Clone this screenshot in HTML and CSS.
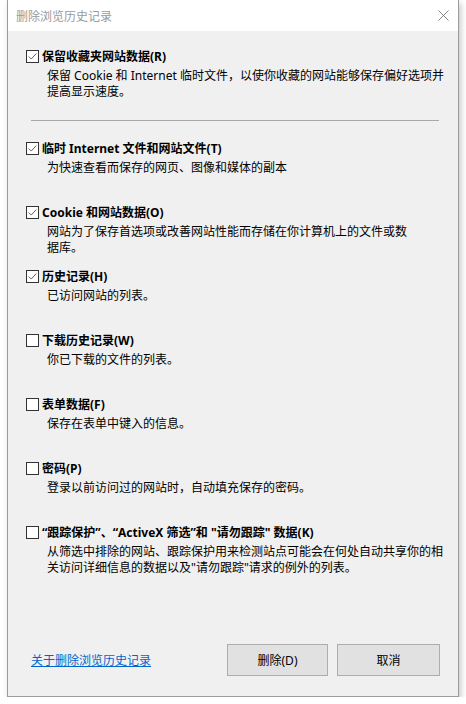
FILE: index.html
```html
<!DOCTYPE html>
<html lang="zh-CN">
<head>
    <meta charset="UTF-8">
    <title>删除浏览历史记录</title>
    <link rel="stylesheet" href="styles.css">
</head>
<body>
    <div class="dialog">
        <div class="titlebar">
            <span class="title">删除浏览历史记录</span>
            <svg class="close" width="12" height="12" viewBox="0 0 12 12">
                <path d="M0.5 0.5 L11.5 11.5 M11.5 0.5 L0.5 11.5" stroke="#7a7a7a" stroke-width="1" fill="none"/>
            </svg>
        </div>

        <div class="content">
            <div class="option first">
                <div class="label"><span class="box checked"><svg viewBox="0 0 13 13"><polyline points="2,6.5 5,9.5 11,3"/></svg></span>保留收藏夹网站数据(R)</div>
                <p class="desc">保留 Cookie 和 Internet 临时文件，以使你收藏的网站能够保存偏好选项并<br>提高显示速度。</p>
            </div>

            <hr class="sep">

            <div class="options">
                <div class="option">
                    <div class="label"><span class="box checked"><svg viewBox="0 0 13 13"><polyline points="2,6.5 5,9.5 11,3"/></svg></span>临时 Internet 文件和网站文件(T)</div>
                    <p class="desc">为快速查看而保存的网页、图像和媒体的副本</p>
                </div>
                <div class="option">
                    <div class="label"><span class="box checked"><svg viewBox="0 0 13 13"><polyline points="2,6.5 5,9.5 11,3"/></svg></span>Cookie 和网站数据(O)</div>
                    <p class="desc">网站为了保存首选项或改善网站性能而存储在你计算机上的文件或数<br>据库。</p>
                </div>
                <div class="option">
                    <div class="label"><span class="box checked"><svg viewBox="0 0 13 13"><polyline points="2,6.5 5,9.5 11,3"/></svg></span>历史记录(H)</div>
                    <p class="desc">已访问网站的列表。</p>
                </div>
                <div class="option">
                    <div class="label"><span class="box"></span>下载历史记录(W)</div>
                    <p class="desc">你已下载的文件的列表。</p>
                </div>
                <div class="option">
                    <div class="label"><span class="box"></span>表单数据(F)</div>
                    <p class="desc">保存在表单中键入的信息。</p>
                </div>
                <div class="option">
                    <div class="label"><span class="box"></span>密码(P)</div>
                    <p class="desc">登录以前访问过的网站时，自动填充保存的密码。</p>
                </div>
                <div class="option">
                    <div class="label"><span class="box"></span>“跟踪保护”、“ActiveX 筛选”和 "请勿跟踪" 数据(K)</div>
                    <p class="desc">从筛选中排除的网站、跟踪保护用来检测站点可能会在何处自动共享你的相<br>关访问详细信息的数据以及"请勿跟踪"请求的例外的列表。</p>
                </div>
            </div>

            <div class="footer">
                <a class="help" href="#">关于删除浏览历史记录</a>
                <button type="button" class="btn btn-delete">删除(D)</button>
                <button type="button" class="btn btn-cancel">取消</button>
            </div>
        </div>
    </div>
</body>
</html>
```

FILE: styles.css
```css
body {
    margin: 0;
    background-color: #ffffff;
    font-family: "Noto Sans", "Noto Sans CJK SC", sans-serif;
    font-size: 12px;
    color: #000;
}
.dialog {
    box-sizing: border-box;
    width: 452px;
    height: 697px;
    margin-left: 7px;
    border: 1px solid #9c9c9c;
    border-top: none;
    background: #f0f0f0;
    box-shadow: 2px 3px 6px rgba(0, 0, 0, 0.22);
    display: flex;
    flex-direction: column;
}
.titlebar {
    height: 31px;
    background: #ffffff;
    display: flex;
    align-items: center;
    justify-content: space-between;
    padding: 0 9px 0 8px;
    flex-shrink: 0;
}
.title {
    color: #9a9a9a;
    font-size: 12px;
}
.close {
    display: block;
    width: 11px;
    height: 11px;
    margin-bottom: 1px;
}
.content {
    flex: 1;
    display: flex;
    flex-direction: column;
    padding: 17px 18px 20px 18px;
}
.label {
    display: flex;
    align-items: center;
    height: 16px;
    font-weight: bold;
    white-space: nowrap;
}
.box {
    box-sizing: border-box;
    width: 13px;
    height: 13px;
    border: 1px solid #333;
    background: #fff;
    margin-right: 3px;
    flex-shrink: 0;
}
.box svg {
    display: block;
    width: 11px;
    height: 11px;
    fill: none;
    stroke: #444;
    stroke-width: 1;
}
.desc {
    margin: 4px 0 0 21px;
    line-height: 16px;
    white-space: nowrap;
}
.sep {
    margin: 20px 1px 19px 5px;
    border: none;
    border-top: 1px solid #a8a8a8;
    height: 0;
}
.options .option {
    height: 64px;
}
.footer {
    margin-top: auto;
    display: flex;
    align-items: center;
    padding-left: 5px;
}
.help {
    flex: 1;
    color: #0066cc;
    text-decoration: underline;
}
.btn {
    box-sizing: border-box;
    height: 32px;
    background: #e1e1e1;
    border: 1px solid #adadad;
    font-family: inherit;
    font-size: 12px;
    color: #000;
    padding: 0;
}
.btn-delete {
    width: 101px;
    margin-right: 9px;
}
.btn-cancel {
    width: 103px;
}
```
